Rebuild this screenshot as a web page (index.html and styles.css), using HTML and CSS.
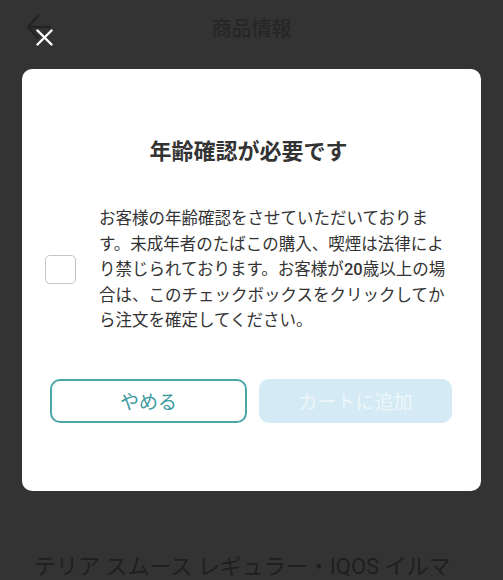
FILE: index.html
```html
<!DOCTYPE html>
<html lang="ja">
<head>
  <meta charset="UTF-8" />
  <meta name="viewport" content="width=device-width, initial-scale=1.0"/>
  <title>商品情報</title>
  <link rel="stylesheet" href="styles.css">
</head>
<body>

  <header class="topbar">
    <span class="back">
      <svg width="26" height="26" viewBox="0 0 26 26"><path d="M12 2 L2 13 L12 24 M2 13 H24" fill="none" stroke="currentColor" stroke-width="2.5" stroke-linecap="round" stroke-linejoin="round"/></svg>
    </span>
    <h1>商品情報</h1>
  </header>

  <div class="gallery"></div>
  <h2 class="product-name">テリア スムース レギュラー・IQOS イルマ</h2>

  <div class="overlay">
    <div class="close-row">
      <button class="close" aria-label="閉じる">
        <svg width="17" height="17" viewBox="0 0 17 17"><path d="M1.5 1.5 L15.5 15.5 M15.5 1.5 L1.5 15.5" stroke="#fff" stroke-width="2.4" stroke-linecap="round"/></svg>
      </button>
    </div>

    <div class="modal">
      <h3>年齢確認が必要です</h3>
      <label class="confirm">
        <input type="checkbox" id="acepto" />
        <span class="box"></span>
        <span class="msg">お客様の年齢確認をさせていただいております。未成年者のたばこの購入、喫煙は法律により禁じられております。お客様が<b>20</b>歳以上の場合は、このチェックボックスをクリックしてから注文を確定してください。</span>
      </label>
      <div class="actions">
        <button class="btn cancel">やめる</button>
        <button class="btn add" id="agregar" disabled>カートに追加</button>
      </div>
    </div>
  </div>

  <script>
    const check = document.getElementById("acepto");
    const agregar = document.getElementById("agregar");
    check.addEventListener("change", function() {
      agregar.disabled = !check.checked;
    });
  </script>
</body>
</html>
```

FILE: styles.css
```css
* {
  box-sizing: border-box;
}
body {
  margin: 0;
  font-family: Roboto, "Noto Sans CJK JP", sans-serif;
  background: #fff;
  color: #bbb;
  overflow: hidden;
}
.topbar {
  height: 55px;
  display: flex;
  align-items: center;
  justify-content: center;
  position: relative;
}
.topbar h1 {
  margin: 0;
  font-size: 20px;
  font-weight: 500;
  color: #bcbcbc;
}
.back {
  position: absolute;
  left: 26px;
  top: 14px;
  color: #aaa;
  display: flex;
}
.gallery {
  height: 495px;
}
.product-name {
  margin: 0;
  padding: 0 34px;
  font-size: 22px;
  font-weight: 400;
  line-height: 1.5;
  color: #9c9c9c;
  white-space: nowrap;
}

.overlay {
  position: fixed;
  inset: 0;
  background: rgba(0,0,0,0.8);
  display: flex;
  flex-direction: column;
  align-items: center;
}
.close-row {
  width: 100%;
  height: 69px;
  padding: 29px 0 0 36px;
}
.close {
  background: none;
  border: none;
  padding: 0;
  display: flex;
}
.modal {
  width: 459px;
  height: 422px;
  background: white;
  border-radius: 10px;
  padding: 0 29px 0 23px;
  color: #333;
}
.modal h3 {
  margin: 66px 0 0;
  text-align: center;
  font-size: 22px;
  font-weight: 700;
  line-height: 33px;
}
.confirm {
  display: flex;
  align-items: center;
  gap: 23px;
  margin-top: 38px;
  padding-right: 5px;
}
.confirm input {
  display: none;
}
.box {
  flex: 0 0 31px;
  height: 29px;
  border: 1.5px solid #c4c4c4;
  border-radius: 5px;
}
.confirm input:checked + .box {
  background: #3aa0a5;
  border-color: #3aa0a5;
}
.msg {
  font-size: 16.5px;
  line-height: 25.6px;
}
.msg b {
  font-weight: 500;
}
.actions {
  display: flex;
  gap: 12px;
  margin-top: 45px;
  padding-left: 5px;
}
.btn {
  flex: 1;
  height: 44px;
  border-radius: 10px;
  font-family: Roboto, "Noto Sans CJK JP", sans-serif;
  font-size: 19px;
}
.cancel {
  background: white;
  border: 2px solid #4aa6a8;
  color: #3a9aa0;
}
.add {
  background: #d4eaf4;
  border: none;
  color: #eef6fa;
}
```
